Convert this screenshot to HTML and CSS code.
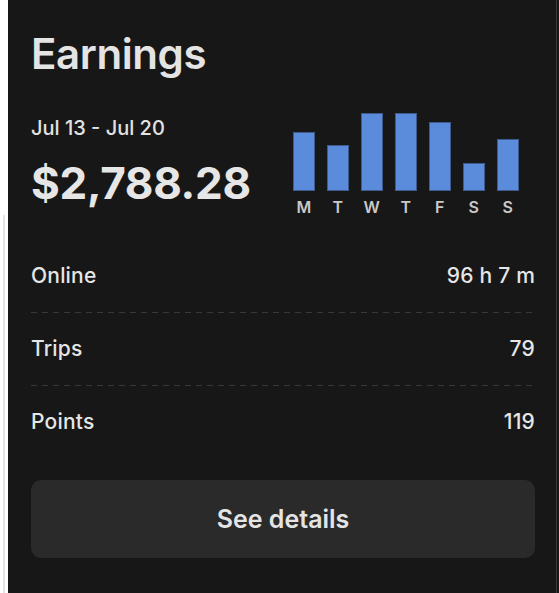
FILE: index.html
```html
<!DOCTYPE html>
<html lang="en">
<head>
<meta charset="utf-8">
<title>Earnings</title>
<link rel="stylesheet" href="styles.css">
</head>
<body>
<div class="page">
  <div class="edge"><div class="edge-line"></div></div>
  <main class="panel">
    <h1 class="title">Earnings</h1>
    <section class="summary">
      <div class="totals">
        <div class="range">Jul 13 - Jul 20</div>
        <div class="amount">$2,788.28</div>
      </div>
      <div class="chart">
        <div class="col"><div class="bar" style="height:59px"></div><span class="day">M</span></div>
        <div class="col"><div class="bar" style="height:46px"></div><span class="day">T</span></div>
        <div class="col"><div class="bar" style="height:78px"></div><span class="day">W</span></div>
        <div class="col"><div class="bar" style="height:78px"></div><span class="day">T</span></div>
        <div class="col"><div class="bar" style="height:69px"></div><span class="day">F</span></div>
        <div class="col"><div class="bar" style="height:28px"></div><span class="day">S</span></div>
        <div class="col"><div class="bar" style="height:52px"></div><span class="day">S</span></div>
      </div>
    </section>
    <ul class="stats">
      <li class="row"><span>Online</span><span>96 h 7 m</span></li>
      <li class="row"><span>Trips</span><span>79</span></li>
      <li class="row"><span>Points</span><span>119</span></li>
    </ul>
    <button class="details" type="button">See details</button>
  </main>
  <div class="rim"></div>
</div>
</body>
</html>
```
FILE: styles.css
```css
* { box-sizing: border-box; }
html, body { margin: 0; padding: 0; height: 100%; }
body {
  background: #ffffff;
  font-family: Inter, "Noto Sans", "DejaVu Sans", sans-serif;
  color: #e6e6e6;
}
.page {
  display: flex;
  min-height: 593px;
}
.edge {
  width: 8px;
  flex: none;
  display: flex;
  justify-content: center;
  padding-top: 215px;
}
.edge-line {
  width: 2px;
  background: #e4e4e4;
}
.panel {
  flex: 1;
  background: #171717;
  padding: 28px 21px 0 23px;
  border-right: 1px solid #3a3a3a;
}
.rim {
  width: 2px;
  flex: none;
  background: #171717;
}
.title {
  margin: 0;
  font-size: 42px;
  line-height: 52px;
  font-weight: 600;
  letter-spacing: -0.4px;
  color: #e4e4e4;
}
.summary {
  display: flex;
  align-items: flex-start;
  gap: 42px;
  margin-top: 32px;
}
.totals {
  display: flex;
  flex-direction: column;
  padding-top: 4px;
}
.range {
  font-size: 20px;
  line-height: 24px;
  font-weight: 500;
  color: #e2e2e2;
}
.amount {
  margin-top: 17px;
  font-size: 44px;
  line-height: 52px;
  font-weight: 700;
  letter-spacing: -0.3px;
  color: #e6e6e6;
}
.chart {
  display: flex;
  gap: 12px;
  align-items: flex-end;
  margin-top: 1px;
}
.col {
  width: 22px;
  display: flex;
  flex-direction: column;
  align-items: center;
}
.bar {
  width: 22px;
  background: #5b8bdb;
  border: 1px solid #3f5a8c;
}
.day {
  margin-top: 7px;
  font-size: 16px;
  line-height: 18px;
  font-weight: 600;
  color: #c9c9c9;
}
.stats {
  list-style: none;
  margin: 24px 0 0;
  padding: 0;
}
.row {
  display: flex;
  justify-content: space-between;
  padding: 24px 0;
  font-size: 21px;
  line-height: 24px;
  font-weight: 500;
  letter-spacing: 0.2px;
  color: #e6e6e6;
}
.row + .row {
  padding-top: 25px;
  background: repeating-linear-gradient(to right, #383838 0 6px, transparent 6px 11px) top left / 100% 1px no-repeat;
}
.details {
  display: block;
  width: 100%;
  height: 78px;
  margin-top: 22px;
  border: 0;
  border-radius: 10px;
  background: #2a2a2a;
  color: #e4e4e4;
  font-family: inherit;
  font-size: 25px;
  font-weight: 600;
}
```
